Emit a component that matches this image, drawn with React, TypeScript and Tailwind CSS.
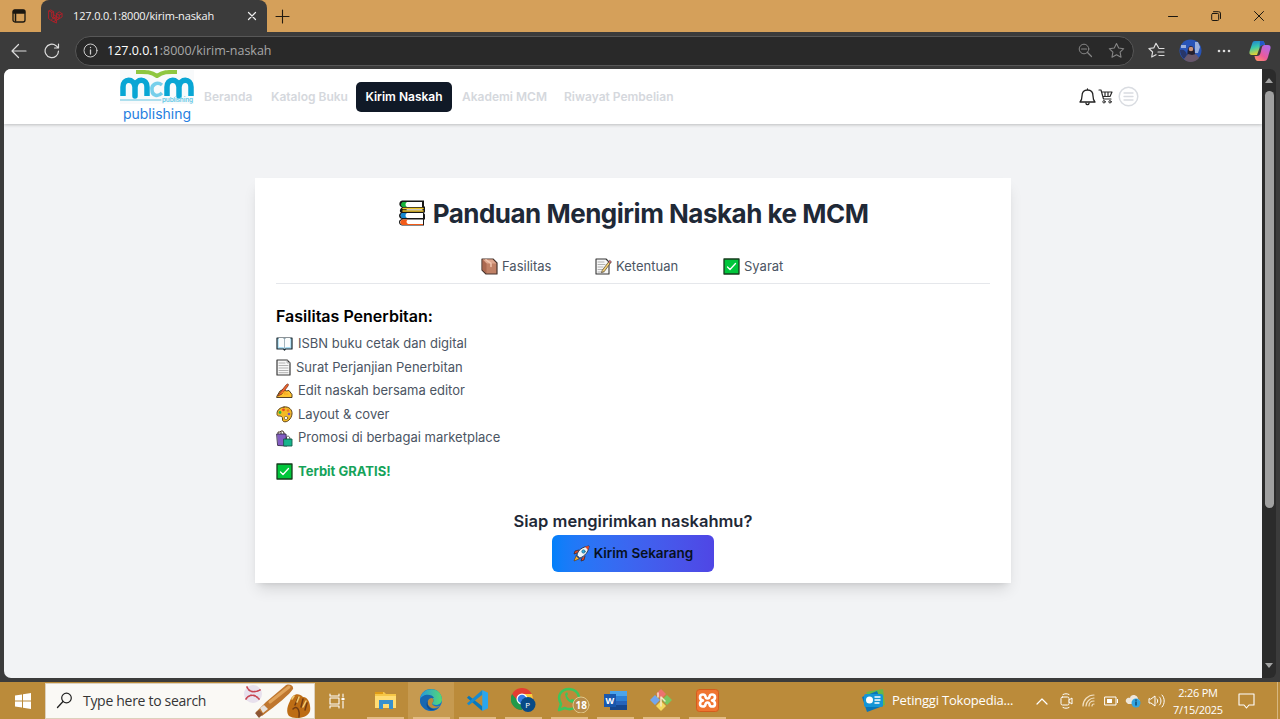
import type { ReactNode } from "react";

const inter = "font-['Inter',sans-serif]";
const segoe = "font-['Open_Sans','Noto_Sans',sans-serif]";

function Svg({ w, h = w, box = "0 0 24 24", className = "", children }: { w: number; h?: number; box?: string; className?: string; children: ReactNode }) {
  return (
    <svg width={w} height={h} viewBox={box} fill="none" className={`shrink-0 ${className}`} strokeLinecap="round" strokeLinejoin="round">
      {children}
    </svg>
  );
}

function Books() {
  return (
    <Svg w={28} box="0 0 28 28" className="mr-[7px]">
      <path d="M4 1.5h22v6h1v6h-1.5l1.5 2v5h-1v6H4c-4-1-4-6 0-6.5-4-1-3.500-5.500-1-6-2-1.500-1-4.500 1-5.500C0 7 1 2 4 1.500Z" fill="#171717" />
      <path d="M6 3h18v5H6C3 7 3 4 6 3Z" fill="#fff" /><path d="M9 3H5C2 4 3 8 5 8h4c-2-1-2-4 0-5Z" fill="#16b33b" />
      <path d="M5 9.500h20M5 12h20" stroke="#f4c928" strokeWidth="1.500" /><path d="M9 10.800h15" stroke="#fff" strokeWidth="1" />
      <path d="M5 14h20v5H5c-3-1-3-4 0-5Z" fill="#fff" /><path d="M9 14H4c-2 1-2 4 0 5h5c-2-1-2-4 0-5Z" fill="#1687cf" />
      <path d="M5 20.500h20V26H5c-4-1-4-4.500 0-5.500Z" fill="#fff" /><path d="M10 20.500H4.500c-3 1-3 4.500 0 5.500H25v-1H10c-2-1-2-3.500 0-4.500Z" fill="#f35b18" />
    </Svg>
  );
}
function Box() {
  return (
    <Svg w={17} box="0 0 17 17">
      <path d="M1 1h11l4 4v11H5l-4-4Z" fill="#c18166" stroke="#49352e" strokeWidth="1.200" />
      <path d="M1.600 1.600h10l3.800 3.800H5.500Z" fill="#dfa78e" /><path d="M5.500 5.500v10L1.600 11.800V1.600Z" fill="#ab6850" />
      <path d="m5 1.800 5 3.600v3" stroke="#f1c5af" strokeWidth="1.500" />
    </Svg>
  );
}
function Memo() {
  return (
    <Svg w={17} box="0 0 17 17">
      <path d="M1 1h10l3 3v12H1Z" fill="#f7f7f7" stroke="#353535" strokeWidth="1.100" />
      <path d="M3 4h6M3 6.500h7M3 9h5M3 11.500h5M3 14h6" stroke="#aaa" strokeWidth=".9" />
      <path d="m7.500 12 6.800-9 1.500 1.500-6.500 9-2.500 1Z" fill="#f4cf76" stroke="#4c4028" strokeWidth=".7" />
      <path d="m13.400 3.700 1.400-1.500 1.600 1.500-1.200 1.500Z" fill="#dc6578" stroke="#333" strokeWidth=".5" />
    </Svg>
  );
}
function Check() {
  return <Svg w={17} box="0 0 17 17"><path d="M1 1h15v15H1Z" fill="#00c63b" stroke="#163b1d" strokeWidth="1.300" /><path d="m4.500 9 2.500 2.500 5.500-6" stroke="#fff" strokeWidth="1.300" /></Svg>;
}
function OpenBook() {
  return <Svg w={17} box="0 0 17 17"><path d="M1 3h15v11H9.500l-1 1-1-1H1Z" fill="#aadcf2" stroke="#1a2930" strokeWidth="1.200" /><path d="M2.800 3h4L8.500 4l1.700-1h4v9H10l-1.500 1L7 12H2.800Z" fill="#fbfdfd" /><path d="M8.500 4v9" stroke="#a5b5bd" /></Svg>;
}
function Paper() {
  return <Svg w={15} h={17} box="0 0 15 17"><path d="M1 1h10l3 3v12H1Z" fill="#f8f8f8" stroke="#3a3a3a" strokeWidth="1.200" /><path d="M11 1v3h3M3 4h6M3 6.500h9M3 9h9M3 11.500h9M3 13.700h9" stroke="#aaa" strokeWidth=".9" /></Svg>;
}
function Writing() {
  return <Svg w={17} box="0 0 17 17"><path d="m1 14 3-5 4-2 2 2 3-.5 3 4v3H1Z" fill="#ffc42e" stroke="#453015" strokeWidth=".9" /><path d="m3 12 7-9c2-2 3-1 2 1l-6 8-4 2Z" fill="#f0642c" stroke="#6c2d1b" strokeWidth=".7" /><path d="m6 11 4-2-2 3h4" stroke="#f6a31f" /></Svg>;
}
function Palette() {
  return <Svg w={17} box="0 0 17 17"><path d="M8 1c5-1 8.500 3 8 7-.5 5-5 9-8.500 7.500-2-1 0-4-2-5C3 9.500 1 11 1 7.500 1 4 4 1.500 8 1Z" fill="#f4ba25" stroke="#60451c" strokeWidth="1" /><circle cx="4" cy="6.500" r="1.400" fill="#23b646" /><circle cx="7.500" cy="3.800" r="1.400" fill="#e64629" /><circle cx="12" cy="4.500" r="1.300" fill="#f47a23" /><circle cx="13" cy="8" r="1.300" fill="#7b54bd" /><circle cx="10" cy="12" r="1.700" fill="#fff" stroke="#60451c" strokeWidth=".6" /></Svg>;
}
function Bags() {
  return <Svg w={17} box="0 0 17 17"><path d="M2 4V2h2l1-1h2l1 2M5 5V2M8 5V3" stroke="#4b392d" strokeWidth="1" /><path d="M1 4h9l1 12-9-.500Z" fill="#825cc1" stroke="#36284b" strokeWidth=".9" /><path d="M8 9h8v7H8Z" fill="#16b48b" stroke="#155b4b" strokeWidth=".9" /><path d="M10 9c0-4 4-4 4 0" stroke="#333" strokeWidth=".8" /></Svg>;
}
function Rocket() {
  return <Svg w={17} box="0 0 17 17"><path d="m4 8-3 1 1-3 4-1M9 13l-1 3 3-1 1-4" fill="#e34a27" stroke="#352222" strokeWidth=".7" /><path d="m3 11-2 5 5-2Z" fill="#ffb52c" stroke="#613d15" strokeWidth=".7" /><path d="M4 10C5 5 9 2 16 1c-.5 6-4 10-9 12Z" fill="#eef7fc" stroke="#222" strokeWidth=".8" /><path d="m12 1.800 4-.8-1 4Z" fill="#e84329" /><circle cx="10.500" cy="6.500" r="1.700" fill="#2eaee4" stroke="#215a75" strokeWidth=".6" /></Svg>;
}

function TitleBar() {
  return (
    <div className={`flex h-8 shrink-0 items-stretch bg-[#d5a05a] ${segoe}`}>
      <div className="flex w-[41px] items-center rounded-br-[7px] pl-3">
        <Svg w={14} box="0 0 14 14"><rect x="1" y="1" width="12" height="12" rx="2" stroke="#1b1710" strokeWidth="1.300" /><path d="M1.500 1.500h11v2.500h-11ZM3.500 4v8" fill="#1b1710" stroke="#1b1710" strokeWidth="1.500" /></Svg>
      </div>
      <div className="flex w-[226px] items-center rounded-t-[8px] bg-[#3b3b3b] pl-[7px]">
        <Svg w={15} h={15} box="0 0 16 16"><path d="m1 2 2-1 3 2v6l3 1.500V5l3-2 3 2v3.500L9 12v3L3 12 1 10.500Zm0 0 3 1.500L6 3M4 3.500v5L9 12M9 5l3 1.500L15 5m-3 1.500V10L6 13.500M9 8l3 2M6 6l3 2-5 3" stroke="#b21f29" strokeWidth="1" /></Svg>
        <span className="ml-[10px] w-[169px] whitespace-nowrap text-[11px] leading-4 tracking-[-0.14px] text-[#f5f5f5]">127.0.0.1:8000/kirim-naskah</span>
        <Svg w={10} box="0 0 10 10" className="ml-[5px]"><path d="m1.500 1.500 7 7m0-7-7 7" stroke="#eee" strokeWidth="1.200" /></Svg>
      </div>
      <div className="flex flex-1 items-center pl-2">
        <Svg w={15} box="0 0 15 15"><path d="M7.500 1v13M1 7.500h13" stroke="#241b10" strokeWidth="1.100" /></Svg>
      </div>
      <div className="flex items-center gap-[33px] pr-4">
        <Svg w={10} box="0 0 10 10"><path d="M.5 5.500h9" stroke="#1b1710" /></Svg>
        <Svg w={10} box="0 0 10 10"><rect x=".7" y="2.500" width="7" height="7" rx="1" stroke="#1b1710" /><path d="M2.500.7h5A2 2 0 0 1 9.500 3v4.500" stroke="#1b1710" /></Svg>
        <Svg w={10} box="0 0 10 10"><path d="m.5.5 9 9m0-9-9 9" stroke="#1b1710" /></Svg>
      </div>
    </div>
  );
}

function Toolbar() {
  return (
    <div className={`flex h-[37px] shrink-0 items-center bg-[#3b3b3b] ${segoe}`}>
      <Svg w={16} box="0 0 16 16" className="ml-[11px]"><path d="M15 8H1m6.500-6.500L1 8l6.500 6.500" stroke="#ddd" strokeWidth="1.200" /></Svg>
      <Svg w={16} box="0 0 16 16" className="ml-[17px]"><path d="M14.500 8A6.700 6.700 0 1 1 12 2.700l2 2M14.500 1v4h-4" stroke="#ddd" strokeWidth="1.200" /></Svg>
      <div className="ml-[15px] flex h-[30px] w-[1059px] items-center rounded-full border border-[#575757] bg-[#292929] pl-[7px]">
        <Svg w={15} box="0 0 15 15"><circle cx="7.500" cy="7.500" r="6.500" stroke="#ccc" /><path d="M7.500 7v4M7.500 4.300v.2" stroke="#ccc" strokeWidth="1.300" /></Svg>
        <span className="ml-[9px] w-[250px] whitespace-nowrap text-[12.500px] leading-5 text-[#a7a7a7]"><span className="text-white">127.0.0.1</span>:8000/kirim-naskah</span>
        <div className="flex-1" />
        <Svg w={15} box="0 0 15 15" className="mr-[15px]"><circle cx="6" cy="6" r="4.800" stroke="#858585" /><path d="m9.500 9.500 4 4M3.500 6h5" stroke="#858585" strokeWidth="1.200" /></Svg>
        <Svg w={17} box="0 0 17 17" className="mr-[8px]"><path d="m8.500 1.500 2.200 4.500 5 .7-3.600 3.500.9 5-4.500-2.400L4 15.200l.9-5L1.300 6.700l5-.7Z" stroke="#858585" strokeWidth="1.100" /></Svg>
      </div>
      <Svg w={17} box="0 0 17 17" className="ml-[14px]"><path d="M10.500 5.500 8 1.300 5.900 5.800l-5 .7 3.700 3.500-.9 5L8 12.700M11 6.500h5M10 10h6M11 13.500h5" stroke="#ddd" strokeWidth="1.200" /></Svg>
      <Svg w={23} box="0 0 23 23" className="ml-[14px]"><circle cx="11.500" cy="11.500" r="11" fill="#2854b8" /><path d="M1 11c4-1 6 1 7 5l-3 4C2 17 1 14 1 11Z" fill="#283669" /><path d="M2 6h5v3H2Zm14-3h3l2 5-2 6h-3Z" fill="#9aafdc" /><path d="M9 20c-1-4-1-11 2-13 4-1 5 5 5 9l-2 5Z" fill="#251f2d" /><circle cx="12" cy="10" r="2.300" fill="#c8927b" /><path d="m5 20 4-5 4 1 4-1 3 4c-4 5-12 5-15 1Z" fill="#69576a" /></Svg>
      <Svg w={14} h={4} box="0 0 14 4" className="ml-[15px]"><circle cx="2" cy="2" r="1.300" fill="#ddd" /><circle cx="7" cy="2" r="1.300" fill="#ddd" /><circle cx="12" cy="2" r="1.300" fill="#ddd" /></Svg>
      <Svg w={22} box="0 0 22 22" className="ml-[18px]"><defs><linearGradient id="co1" x1="0" y1="0" x2="0.300" y2="1"><stop stopColor="#1d79d6" /><stop offset=".5" stopColor="#38c9ac" /><stop offset="1" stopColor="#e5d432" /></linearGradient><linearGradient id="co2" x1="0.700" y1="0" x2="0" y2="1"><stop stopColor="#b368e6" /><stop offset=".55" stopColor="#ec5a9a" /><stop offset="1" stopColor="#ff9c62" /></linearGradient></defs><path d="M6 1h7c2 0 2.500 2 3 4h-2c-2 0-3 1-3.500 3L8 15H4c-4 0-4-2-3-5l2-6c.6-2 1-3 3-3Z" fill="url(#co1)" /><path d="M13 7c1-2 2-2 4-2h2c3 0 3 3 2 5l-2 7c-1 3-2 4-4 4H9c-2 0-3-2-3.500-5H8c2 0 3-1 3.500-3Z" fill="url(#co2)" /><path d="M11 1h3c1 0 1.500 2 2 4h-2c-2 0-3 1-3.500 3Z" fill="#2457c9" /></Svg>
    </div>
  );
}

function Logo() {
  return (
    <div className="flex w-[74px] flex-col items-center">
      <Svg w={74} h={34} box="0 0 74 34" className="bg-[#f8fafb]">
        <path d="M16 2c8 0 14-1 21 4C44 1 50 2 57 2" stroke="#8fc741" strokeWidth="4" strokeLinecap="butt" />
        <path d="M3 26V17c0-9 11-9 12 0v9-9c1-9 12-9 12 0v9M47 26V17c0-9 11-9 12 0v9-9c1-9 12-9 12 0v9" stroke="#09a6d4" strokeWidth="5.500" strokeLinecap="butt" />
        <path d="M42 15c-5-4-11 0-10 5 0 6 6 7 10 3" stroke="#76cfeb" strokeWidth="3.500" strokeLinecap="butt" />
        <path d="M0 30h41" stroke="#65c3df" strokeWidth="1" />
        <text x="42" y="32" textLength="31" fontSize="6.500" fontWeight="600" fontFamily="Inter" fill="#68c9e6">publishing</text>
      </Svg>
      <span className="mt-[1px] whitespace-nowrap text-[14px] leading-[18px] text-[#257ee0]">publishing</span>
    </div>
  );
}

function NavBar() {
  return (
    <div className={`z-10 flex h-[55px] shrink-0 items-center bg-white pl-[116px] text-[12px] font-semibold text-[#d5d8dd] shadow-[0_1px_3px_rgba(0,0,0,.22)] ${inter}`}>
      <div className="font-normal"><Logo /></div>
      <span className="w-[67px] whitespace-nowrap pl-[10px]">Beranda</span>
      <span className="w-[95px] whitespace-nowrap pl-[10px]">Katalog Buku</span>
      <span className="flex h-[30px] w-[96px] items-center justify-center whitespace-nowrap rounded-[5px] bg-[#101927] text-white">Kirim Naskah</span>
      <span className="w-[102px] whitespace-nowrap pl-[10px]">Akademi MCM</span>
      <span className="whitespace-nowrap pl-[10px]">Riwayat Pembelian</span>
      <div className="flex-1" />
      <Svg w={17} h={18} box="0 0 17 18"><path d="M1 14c2-2 2-3 2-6 0-4 2-6 5.500-6S14 4 14 8c0 3 0 4 2 6ZM7 15.500c.3 1.500 2.700 1.500 3 0M8.500 2V1" stroke="#222" strokeWidth="1.300" /></Svg>
      <Svg w={15} box="0 0 15 15" className="ml-[2px]"><path d="M1 1h2l2.500 9H13M3.500 3H14l-2 4.500H5M7 3.500v3.500M10 3.500v3.500" stroke="#2a2a2a" strokeWidth="1.200" /><circle cx="6" cy="12.800" r="1.200" stroke="#2a2a2a" /><circle cx="12" cy="12.800" r="1.200" stroke="#2a2a2a" /></Svg>
      <Svg w={21} box="0 0 21 21" className="ml-[5px] mr-[123px]"><circle cx="10.500" cy="10.500" r="9.300" stroke="#d9dce1" strokeWidth="1.500" /><path d="M6 7h9M6 10.500h9M6 14h9" stroke="#d9dce1" strokeWidth="1.300" /></Svg>
    </div>
  );
}

function Item({ icon, text }: { icon: ReactNode; text: string }) {
  return <li className="flex h-[23.600px] items-center gap-[5px] whitespace-nowrap">{icon}<span>{text}</span></li>;
}

function Card() {
  return (
    <main className={`mx-auto mt-[54px] flex h-[405px] w-[756px] -translate-x-0 flex-col bg-white px-[21px] shadow-[0_9px_14px_-3px_rgba(0,0,0,.12),0_4px_6px_-4px_rgba(0,0,0,.12)] ${inter}`}>
      <h1 className="mt-[17px] flex h-9 items-center justify-center whitespace-nowrap text-[26px] font-bold tracking-[-0.500px] text-[#1f2937]"><Books />Panduan Mengirim Naskah ke MCM</h1>
      <div className="mt-[22px] flex h-[31px] shrink-0 border-b border-[#e5e7eb] pl-[205px] text-[13px] leading-[26px] text-[#4b5563]">
        <div className="flex h-[26px] w-[114px] items-center gap-1"><Box />Fasilitas</div>
        <div className="flex h-[26px] w-[128px] items-center gap-1"><Memo />Ketentuan</div>
        <div className="flex h-[26px] items-center gap-1"><Check />Syarat</div>
      </div>
      <h2 className="mt-[19px] h-[26px] text-[16px] font-semibold leading-[26px] text-black">Fasilitas Penerbitan:</h2>
      <ul className="mt-[3px] text-[13px] text-[#4b5563]">
        <Item icon={<OpenBook />} text="ISBN buku cetak dan digital" />
        <Item icon={<Paper />} text="Surat Perjanjian Penerbitan" />
        <Item icon={<Writing />} text="Edit naskah bersama editor" />
        <Item icon={<Palette />} text="Layout & cover" />
        <Item icon={<Bags />} text="Promosi di berbagai marketplace" />
      </ul>
      <div className="mt-[10px] flex h-6 items-center gap-[5px] text-[13px] font-bold text-[#16a35a]"><Check />Terbit GRATIS!</div>
      <div className="mt-[23px] flex flex-col items-center">
        <h3 className="h-7 whitespace-nowrap text-[16.500px] font-semibold leading-7 text-[#1f2937]">Siap mengirimkan naskahmu?</h3>
        <button className="flex h-[37px] w-[162px] items-center justify-center gap-[4px] rounded-[6px] bg-linear-to-r from-[#0080fa] to-[#4f46e5] text-[13.500px] font-semibold text-[#07111f]"><Rocket />Kirim Sekarang</button>
      </div>
    </main>
  );
}

function App_({ active = false, children }: { active?: boolean; children: ReactNode }) {
  return (
    <div className={`flex h-[37px] w-[46px] flex-col items-center justify-between pt-[6px] ${active ? "bg-[#c69a50]" : ""}`}>
      <div className="flex h-6 items-center">{children}</div><div className="h-[2px] w-[37px] bg-[#e3bc83]" />
    </div>
  );
}

function Taskbar() {
  return (
    <div className={`flex h-[37px] shrink-0 items-center bg-[#bb8b3a] text-white ${segoe}`}>
      <Svg w={16} box="0 0 16 16" className="ml-[15px] mr-[14px]"><path d="M0 2.500 7 1.500V7.500H0ZM8 1.300 16 0v7.500H8ZM0 8.500h7v6L0 13.500ZM8 8.500h8V16L8 14.700Z" fill="#fff" /></Svg>
      <div className="flex h-9 w-[270px] items-center border border-[#ddd1bd] bg-[#faf9f5] pl-[10px] text-[#353535]">
        <Svg w={17} box="0 0 17 17"><circle cx="10.500" cy="6" r="4.800" stroke="#222" strokeWidth="1.200" /><path d="m7 9.500-5.500 6" stroke="#222" strokeWidth="1.300" /></Svg>
        <span className="ml-[10px] w-[160px] whitespace-nowrap text-[14px] tracking-[-0.300px]">Type here to search</span>
        <Svg w={68} h={34} box="0 0 68 34"><circle cx="10" cy="10" r="9" fill="#e8e1ed" /><path d="M4 3c2 5 7 6 13 3M3 15c3-5 9-5 13 0" stroke="#c84451" strokeWidth="1.700" strokeDasharray="1.500 1.500" /><path d="m13 28 10-10L42 2c3-3 9-1 8 3-3 5-15 15-31 27Z" fill="#bf772f" /><path d="m27 18 19-15" stroke="#e1a45b" strokeWidth="3" /><path d="m12 29 4-3 4 4-4 4Z" fill="#8d5734" /><path d="m17 24 4-3 4 4-5 4Z" fill="#e7e2dd" /><path d="M46 32c-3-4-2-9 1-15 3-8 9-8 13-4 6 0 8 9 7 14-2 7-14 9-21 5Z" fill="#bd6d15" /><path d="M50 25c4-4 7 1 6 8M55 14l-3 7m8-6-2 8m6-4-2 7" stroke="#713b13" strokeWidth="1.500" /><path d="m49 15 2-3m5 1-2 5m9-1-3 6" stroke="#f0cb73" strokeWidth="1.600" /></Svg>
      </div>
      <Svg w={16} box="0 0 16 16" className="ml-[14px] mr-[17px]"><path d="M1 1v2h9V1M1 15v-2h9v2M1 5h9v6H1ZM14 1v3M14 8v7" stroke="#fff" strokeWidth="1.100" /><path d="M12.500 5h3v2h-3Z" fill="#fff" /></Svg>
      <App_><Svg w={21} h={19} box="0 0 21 19"><path d="M0 1h9l2 2h10v14H0Z" fill="#f6c646" /><path d="M0 5h21v12H0Z" fill="#ffdc73" /><path d="M0 1h8v2H0Z" fill="#e09c16" /><path d="M4 18V9h14v9h-4v-5H8v5Z" fill="#3690ce" /></Svg></App_>
      <App_ active><Svg w={24} box="0 0 24 24"><defs><linearGradient id="edge"><stop stopColor="#2499df" /><stop offset="1" stopColor="#55da73" /></linearGradient></defs><circle cx="12" cy="12" r="11" fill="#1673c6" /><path d="M1 11C3-2 23-2 23 12c-1 6-9 6-10 3 4-2 0-8-5-8-3 0-6 2-7 4Z" fill="url(#edge)" /><path d="M1 12c3-7 12-6 14-2-5-1-8 5-4 9 4 3 8 1 10-1-4 6-12 6-16 2-3-2-4-5-4-8Z" fill="#1767b0" /><path d="M13 10c-4 0-6 5-3 8 3 4 9 2 11 0-4 1-8 0-8-3 2-1 2-4 0-5Z" fill="#bb8b3a" /><path d="M9 13c-2 5 3 9 8 8-7 4-12-4-8-8Z" fill="#114b8b" /></Svg></App_>
      <App_><Svg w={23} box="0 0 24 24"><path d="M17 1v22L1 9l2-2 14 11Z" fill="#0878bb" /><path d="M17 1 1 15l2 2L17 6Z" fill="#168bd1" /><path d="m17 1 6 3v16l-6 3Z" fill="#29a6ef" /></Svg></App_>
      <App_><Svg w={25} h={24} box="0 0 25 24"><circle cx="11" cy="11" r="11" fill="#e43c31" /><path d="M1 6a11 11 0 0 0 10 16l5-9H7Z" fill="#229a4a" /><path d="M12 6h9c3 8-2 16-10 16l5-9Z" fill="#fbcd3c" /><circle cx="11" cy="11" r="5.500" fill="#fff" /><circle cx="11" cy="11" r="4.300" fill="#357de6" /><circle cx="17" cy="16.500" r="7.500" fill="#074a86" /><text x="14.300" y="19.700" fontSize="8" fill="#fff">P</text></Svg></App_>
      <App_><Svg w={33} h={26} box="0 0 33 26" className="ml-2"><path d="m2 23 2-6C-1 8 5 2 12 2c11 0 14 14 5 19-4 2-7 1-9 0Z" stroke="#3cc65b" strokeWidth="2.500" /><path d="M8 7c1 6 4 9 9 9l1-3-3-1-2 1-3-4 1-2-1-2Z" fill="#3cc65b" /><circle cx="24" cy="18" r="8" fill="#b68a48" stroke="#e1c78a" /><text x="18.500" y="22" fontSize="10" fontWeight="700" fill="#fff">18</text></Svg></App_>
      <App_><Svg w={23} h={21} box="0 0 23 21"><path d="M6 1h17v19H6Z" fill="#2763b9" /><path d="M6 1h17v5H6Z" fill="#4ba4ea" /><path d="M6 6h17v5H6Z" fill="#2d80d5" /><path d="M6 15h17v5H6Z" fill="#17478e" /><path d="M0 4h12v13H0Z" fill="#1958ad" /><text x="1.500" y="14" fontSize="9" fontWeight="700" fill="#fff">W</text></Svg></App_>
      <App_><Svg w={24} box="0 0 24 24"><path d="m12 1 5 5-5 5-5-5Z" fill="#ec7270" /><path d="m6 7 5 5-5 5-5-5Z" fill="#73a6ee" /><path d="m18 7 5 5-5 5-5-5Z" fill="#79c760" /><path d="m12 13 5 5-5 5-5-5Z" fill="#f4d75e" /><path d="M9 5v4M12 18V9l4 4" stroke="#f5e7c5" strokeWidth="1.500" /></Svg></App_>
      <App_><Svg w={23} box="0 0 23 23"><rect x=".5" y=".5" width="22" height="22" rx="3" fill="#f07530" stroke="#d55c1d" /><path d="M7 5.500c4 0 1 4 4.500 4s.5-4 4.500-4 4 5 0 6c4 1 4 6 0 6s-1-4-4.500-4-.5 4-4.500 4-4-5 0-6c-4-1-4-6 0-6Z" stroke="#fff" strokeWidth="2.600" /></Svg></App_>
      <div className="flex-1" />
      <Svg w={23} box="0 0 23 23"><path d="m4 3 17-3 2 16-8 2Z" fill="#67b84a" /><path d="m0 8 15-6 6 15-16 6Z" fill="#0875b8" /><rect x="2" y="5" width="19" height="13" rx="2" fill="#1395d6" /><circle cx="7.500" cy="11" r="3.500" fill="#fff" /><path d="M13 8h5M13 11h5M13 14h4" stroke="#fff" strokeWidth="1.400" /></Svg>
      <span className="ml-[7px] w-[144px] whitespace-nowrap text-[13px] tracking-[-0.200px]">Petinggi Tokopedia...</span>
      <Svg w={12} h={8} box="0 0 12 8"><path d="m1 7 5-5 5 5" stroke="#fff" strokeWidth="1.200" /></Svg>
      <Svg w={13} h={16} box="0 0 13 16" className="ml-[12px]"><rect x="1" y="4" width="8" height="8" rx="1.500" stroke="#fff" /><path d="m9 7 3-2v6L9 9M3 1.500c2-1 4-1 6 0M3 14.500c2 1 4 1 6 0" stroke="#fff" /></Svg>
      <Svg w={13} box="0 0 13 13" className="ml-[9px]"><path d="M1 12C1 6 6 1 12 1M4 12c0-4 4-8 8-8M7 12c0-3 2-5 5-5M10 12c0-1 1-2 2-2" stroke="#f1dfc0" strokeWidth="1.200" /></Svg>
      <Svg w={15} h={10} box="0 0 15 10" className="ml-[9px]"><path d="M1 1h11v8H1Z" stroke="#fff" /><path d="M3 3h5v4H3ZM13 3h1v4h-1Z" fill="#fff" /></Svg>
      <Svg w={16} h={15} box="0 0 16 15" className="ml-[6px]"><path d="M1 9c-1-3 2-5 4-4 1-5 8-3 8 1 3 1 2 5 0 5H3Z" fill="#eee6da" /><circle cx="11" cy="10" r="4.500" fill="#33a5df" /><path d="M11 9v3M11 7v.2" stroke="#104a70" strokeWidth="1.500" /></Svg>
      <Svg w={17} h={14} box="0 0 17 14" className="ml-[7px]"><path d="M1 5v4h2l4 3V2L3 5ZM9 5c1 1 1 3 0 4M11.500 3c2 2 2 6 0 8M14 1c3 3 3 9 0 12" stroke="#fff" /></Svg>
      <div className="ml-[7px] flex w-[52px] flex-col items-center whitespace-nowrap text-[11px] leading-[17px] tracking-[-0.250px]"><span>2:26 PM</span><span>7/15/2025</span></div>
      <Svg w={17} h={16} box="0 0 17 16" className="ml-[14px] mr-[22px]"><path d="M1 1h15v11h-5l-2.500 3L6 12H1Z" stroke="#fff" strokeWidth="1.100" /></Svg>
      <div className="mr-[2px] h-full w-px bg-[#d7b780]" />
    </div>
  );
}

export default function App() {
  return (
    <div className="flex h-[719px] w-[1280px] flex-col overflow-hidden bg-[#3b3b3b]">
      <TitleBar />
      <Toolbar />
      <div className="flex h-[613px] shrink-0 pb-1 pl-1">
        <div className="flex w-[1258px] flex-col overflow-hidden rounded-tl-[7px] rounded-bl-[7px] bg-[#f2f3f5]">
          <NavBar /><Card />
        </div>
        <div className="flex w-[14px] flex-col items-center rounded-r-[6px] bg-[#2b2b2b] pt-[9px]">
          <Svg w={8} h={5} box="0 0 8 5"><path d="m0 5 4-5 4 5Z" fill="#a3a3a3" /></Svg>
          <div className="mt-[8px] h-[417px] w-[9px] rounded-full bg-[#a0a0a0]" />
          <Svg w={8} h={5} box="0 0 8 5" className="mt-auto mb-[10px]"><path d="m0 0 4 5 4-5Z" fill="#a3a3a3" /></Svg>
        </div>
      </div>
      <Taskbar />
    </div>
  );
}
